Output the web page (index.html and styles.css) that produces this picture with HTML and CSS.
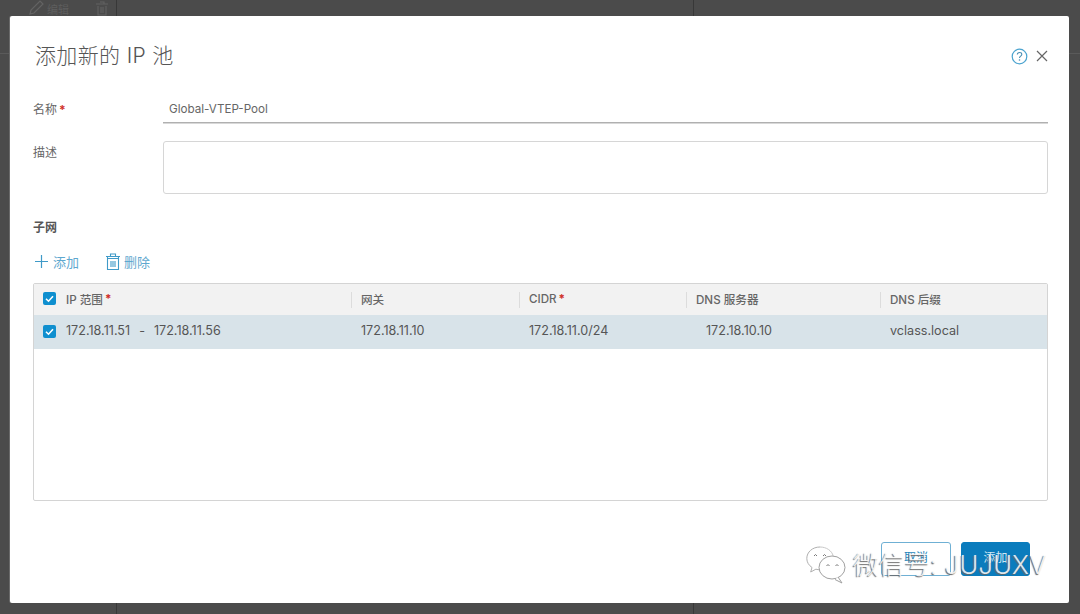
FILE: index.html
```html
<!DOCTYPE html>
<html lang="zh">
<head>
<meta charset="utf-8">
<title>添加新的 IP 池</title>
<link rel="stylesheet" href="styles.css">
</head>
<body>
<div class="backdrop">
  <span class="bg-line bg-line-a"></span>
  <span class="bg-line bg-line-b"></span>
  <span class="bg-rule bg-rule-left"></span>
  <span class="bg-rule bg-rule-right"></span>
  <svg class="bg-pencil" width="18" height="15" viewBox="0 0 18 15"><path d="M2 14l1-4L12 1l3 3-9 9z" fill="none" stroke="#636363" stroke-width="1.200"/></svg>
  <span class="bg-edit">编辑</span>
  <svg class="bg-trash" width="14" height="15" viewBox="0 0 14 15"><path d="M1 3h12M3 5v9h8V5M5 1h4v2M6 6v6M8 6v6" fill="none" stroke="#636363" stroke-width="1.100"/></svg>
</div>
<main class="modal">
  <header class="title-row">
    <h1 class="title">添加新的 IP 池</h1>
    <div class="title-icons">
      <svg class="icon-help" width="17" height="17" viewBox="0 0 17 17"><circle cx="8.500" cy="8.500" r="7.300" fill="none" stroke="#4aa3cf" stroke-width="1.200"/><path d="M6.300 6.600c0-1.300 1-2.100 2.300-2.100s2.200.8 2.200 1.900c0 1.700-2.300 1.700-2.300 3.500" fill="none" stroke="#4a8fb3" stroke-width="1.100"/><circle cx="8.500" cy="12" r=".8" fill="#4a8fb3"/></svg>
      <svg class="icon-close" width="12" height="12" viewBox="0 0 12 12"><path d="M1 1l10 10M11 1L1 11" stroke="#666" stroke-width="1.200" fill="none"/></svg>
    </div>
  </header>

  <div class="field field-name">
    <label class="field-label">名称<span class="req">*</span></label>
    <div class="name-input">Global-VTEP-Pool</div>
  </div>
  <div class="field field-desc">
    <label class="field-label">描述</label>
    <div class="desc-input"></div>
  </div>

  <h2 class="section">子网</h2>
  <div class="toolbar">
    <span class="tool tool-add">
      <svg width="13" height="13" viewBox="0 0 13 13"><path d="M6.500 0v13M0 6.500h13" stroke="#3f9ac8" stroke-width="1.200" fill="none"/></svg>
      添加
    </span>
    <span class="tool tool-del">
      <svg width="14" height="17" viewBox="0 0 14 17"><path d="M0 3.500h14M4.500 3.500V1h5v2.500M1.500 3.500v13h11v-13M1.500 5.500h11M5 8v6M7 8v6M9 8v6" stroke="#3f9ac8" stroke-width="1.100" fill="none"/></svg>
      删除
    </span>
  </div>

  <section class="grid">
    <div class="grid-row grid-head">
      <div class="cell cell-first"><span class="check"><svg width="13" height="13" viewBox="0 0 13 13"><path d="M3 6.700l2.500 2.500L10 4.200" stroke="#fff" stroke-width="1.600" fill="none"/></svg></span>IP 范围<span class="req">*</span></div>
      <div class="cell">网关</div>
      <div class="cell">CIDR<span class="req">*</span></div>
      <div class="cell">DNS 服务器</div>
      <div class="cell cell-last">DNS 后缀</div>
    </div>
    <div class="grid-row grid-data">
      <div class="cell cell-first"><span class="check"><svg width="13" height="13" viewBox="0 0 13 13"><path d="M3 6.700l2.500 2.500L10 4.200" stroke="#fff" stroke-width="1.600" fill="none"/></svg></span><span class="range">172.18.11.51<span class="dash">-</span>172.18.11.56</span></div>
      <div class="cell">172.18.11.10</div>
      <div class="cell">172.18.11.0/24</div>
      <div class="cell cell-dns">172.18.10.10</div>
      <div class="cell">vclass.local</div>
    </div>
  </section>

  <footer class="footer">
    <button class="btn btn-outline">取消</button>
    <button class="btn btn-solid">添加</button>
  </footer>
</main>
<div class="watermark">
  <svg width="40" height="38" viewBox="0 0 40 38"><path d="M14 1C6.500 1 .8 6 .8 12.500c0 3.700 2 6.800 5.200 9l-1.300 4.500 5.200-2.800c1.500.4 2.800.6 4.300.6" fill="#fff" stroke="#b0b0b0" stroke-width="1"/><path d="M14 1c6.300 0 11.800 3.500 13.200 9" fill="none" stroke="#c8c8c8" stroke-width="1"/><ellipse cx="26" cy="21.500" rx="13" ry="11.500" fill="#fff" stroke="#a0a0a0" stroke-width="1"/><path d="M32 31l4 6-7-3.500" fill="#fff" stroke="#a0a0a0" stroke-width="1"/><path d="M8 10l1.500-1.500L11 10M17 10l1.500-1.500L20 10M20.500 20l1.500-1.500 1.500 1.500M29.500 20l1.500-1.500 1.500 1.500" fill="none" stroke="#777" stroke-width="1"/></svg>
  <span class="wm-text">微信号: JUJUXV</span>
</div>
</body>
</html>
```
FILE: styles.css
```css
* { box-sizing: border-box; }
html, body { margin: 0; height: 100%; }
body {
  width: 1080px;
  height: 614px;
  overflow: hidden;
  background: #4b4b4b;
  padding: 16px 11px 11px 10px;
  font-family: "Inter", "Noto Sans CJK SC", sans-serif;
  font-size: 12px;
  color: #565656;
  position: relative;
}
.backdrop { position: absolute; inset: 0; }
.bg-line { position: absolute; top: 0; width: 1px; height: 100%; background: #383838; }
.bg-line-a { left: 116px; }
.bg-line-b { left: 693px; }
.bg-rule { position: absolute; top: 53px; height: 1px; background: #5a5a5a; }
.bg-rule-left { left: 0; width: 10px; }
.bg-rule-right { right: 0; width: 11px; }
.bg-pencil { position: absolute; left: 28px; top: 0; }
.bg-edit { position: absolute; left: 47px; top: 1px; font-size: 11px; color: #5e5e5e; }
.bg-trash { position: absolute; left: 95px; top: 1px; }
.modal {
  position: relative;
  width: 1059px;
  height: 587px;
  background: #fff;
  padding: 26px 21px 0 23px;
  border-radius: 2px;
  box-shadow: -1px 0 0 #6a6a6a;
}
.title-row { display: flex; justify-content: space-between; align-items: center; height: 28px; padding-left: 2px; }
.title { margin: 0; font-size: 21px; font-weight: 300; color: #555; letter-spacing: .35px; line-height: 28px; }
.title-icons { display: flex; align-items: center; gap: 8px; }
.icon-help, .icon-close { display: block; }
.field { display: flex; }
.field-label { width: 130px; font-size: 12px; color: #666; }
.field-name { margin-top: 26px; height: 27px; }
.field-name .field-label { padding-top: 4px; }
.field-desc { margin-top: 18px; height: 53px; }
.field-desc .field-label { padding-top: 2px; }
.name-input { flex: 1; border-bottom: 1px solid #b0b0b0; box-shadow: 0 1px 0 #d8d8d8; padding: 6px 0 0 6px; font-size: 11.650px; color: #666; height: 27px; }
.desc-input { flex: 1; border: 1px solid #d6d6d6; border-radius: 3px; }
.req { color: #d0302a; font-weight: 700; margin-left: 2px; }
.section { margin: 25px 0 0; font-size: 12px; font-weight: 700; line-height: 18px; color: #565656; }
.toolbar { display: flex; height: 24px; margin-top: 12px; align-items: center; padding-left: 2px; }
.tool { display: flex; align-items: center; font-size: 13px; color: #5fa8cf; }
.tool-add { gap: 5px; }
.tool-del { gap: 4px; margin-left: 27px; }
.grid { margin-top: 10px; height: 218px; border: 1px solid #d4d4d4; border-radius: 2px; }
.grid-row { display: grid; grid-template-columns: 318px 168px 167px 194px 1fr; }
.grid-head { height: 31px; background: #f2f2f2; font-weight: 500; font-size: 11.600px; color: #666; }
.grid-data { height: 34px; background: #d8e3e9; font-size: 12.600px; color: #555; }
.cell { display: flex; align-items: center; padding-left: 9px; white-space: nowrap; position: relative; }
.grid-head .cell { padding-bottom: 2px; }
.cell-dns { padding-left: 19px; }
.grid-head .cell:not(.cell-last)::after { content: ""; position: absolute; right: 0; top: 8px; bottom: 7px; width: 1px; background: #dcdcdc; }
.grid-data .cell { padding-bottom: 4px; }
.grid-data .cell-first { padding: 0 0 3px 9px; }
.check { display: inline-flex; align-items: center; justify-content: center; width: 13px; height: 13px; background: #0f8fcf; border-radius: 2px; margin-right: 10px; flex: none; }
.grid-data .check { position: relative; top: 1px; }
.dash { margin: 0 9px; }
.footer { display: flex; justify-content: flex-end; gap: 10px; margin-top: 41px; padding-right: 18px; }
.btn { width: 70px; height: 34px; border-radius: 3px; font: inherit; font-size: 12px; padding: 0 0 5px; }
.btn-outline { background: #fff; border: 1px solid #6fb0d4; color: #1f86bb; }
.btn-solid { width: 69px; background: #0a7cbd; border: 1px solid #0a7cbd; color: #cfe6f3; }
.watermark { position: absolute; left: 806px; top: 546px; display: flex; align-items: flex-start; gap: 7px; }
.wm-text { font-size: 25.500px; line-height: 38px; font-weight: 300; color: rgba(255,255,255,.85); text-shadow: -1px 1px 1px #666; white-space: nowrap; letter-spacing: .2px; }
```
